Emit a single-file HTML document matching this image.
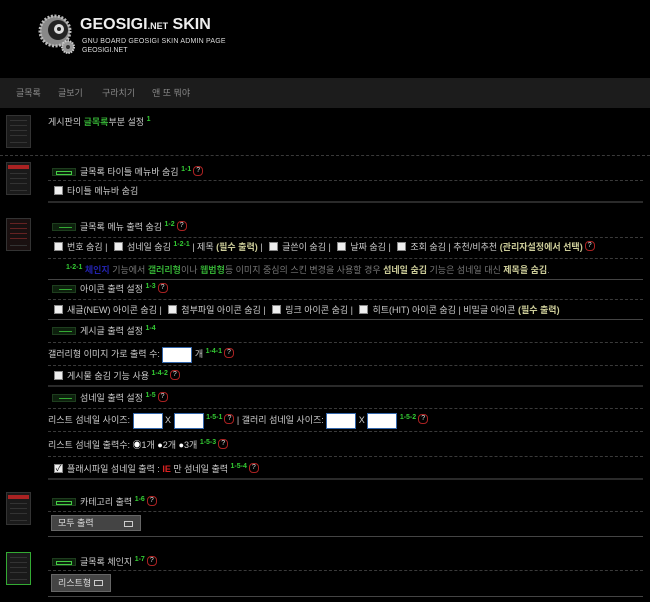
<!DOCTYPE html>
<html><head><meta charset="utf-8"><style>
*{margin:0;padding:0;box-sizing:border-box}
body{width:650px;height:602px;background:#000;overflow:hidden;position:relative;font-family:"Liberation Sans","Noto Sans CJK KR",sans-serif;font-size:9px;color:#ccc}
.a{position:absolute;white-space:nowrap;line-height:12px}
.dl{position:absolute;left:48px;right:7px;border-top:1px dashed #3a3a3a;height:0}
.sl{position:absolute;left:48px;right:7px;border-top:2px solid #2a2a2a;height:0}
.g{color:#3c3;font-weight:bold;font-size:7px;position:relative;top:-4px;line-height:0}
.y{color:#cc9;font-weight:bold}
.gr{color:#3a3;font-weight:bold}
.q{display:inline-block;width:10px;height:10px;border:1px solid #a22;border-radius:4px;color:#ddd;font-size:7px;line-height:8px;text-align:center;vertical-align:middle;margin-left:2px;position:relative;top:-2px}
.cb{display:inline-block;width:9px;height:9px;background:#eee;border:1px solid #888;vertical-align:middle;margin:0 4px 0 4px;position:relative;top:-1px}
.bar{display:inline-block;width:24px;height:8px;background:#0d200d;border:1px solid #1e3e1e;vertical-align:middle;margin-right:4px;position:relative;top:-1px}
.bar.on:after{content:"";position:absolute;left:3px;right:3px;top:2px;height:2px;border:1px solid #4c4}
.bar.off:after{content:"";position:absolute;left:6px;right:3px;top:3px;height:1px;background:#3a3}
.in{display:inline-block;width:30px;height:16px;background:#fff;border:1px solid #36a;vertical-align:middle}
.ic{position:absolute;left:6px;width:25px;height:33px;background:#1a1a1a;border:1px solid #333}
.ic i{position:absolute;left:3px;right:3px;height:1px;background:#333}
.sel{position:absolute;height:16px;background:#444;border:1px solid #666;color:#ddd;padding-left:6px;line-height:14px}
.sel:after{content:"";position:absolute;right:7px;top:5px;width:7px;height:4px;border:1px solid #ccc}
</style></head><body>
<div class="a" style="left:38px;top:14px;width:38px;height:40px">
<svg width="38" height="40" viewBox="0 0 38 40"><circle cx="17" cy="17" r="15" fill="#888" stroke="#bbb" stroke-width="3" stroke-dasharray="2 1.5"/><circle cx="20" cy="16" r="10" fill="#222"/><circle cx="21" cy="15" r="5" fill="#ddd"/><circle cx="21" cy="15" r="2" fill="#222"/><circle cx="30" cy="33" r="6" fill="#999" stroke="#ccc" stroke-width="2" stroke-dasharray="1.5 1"/><circle cx="30" cy="33" r="2" fill="#333"/></svg></div>
<div class="a" style="left:80px;top:16px;font-size:16px;line-height:18px;font-weight:bold;color:#eee">GEOSIGI<span style="font-size:9px">.NET</span> SKIN</div>
<div class="a" style="left:82px;top:36px;font-size:7px;color:#ddd;letter-spacing:0.2px">GNU BOARD GEOSIGI SKIN ADMIN PAGE</div>
<div class="a" style="left:82px;top:45px;font-size:7px;color:#ddd">GEOSIGI.NET</div>
<div class="a" style="left:0;top:78px;width:650px;height:30px;background:#1c1c1c"></div>
<div class="a" style="left:16px;top:87px;color:#888">글목록</div>
<div class="a" style="left:58px;top:87px;color:#888">글보기</div>
<div class="a" style="left:102px;top:87px;color:#888">구라치기</div>
<div class="a" style="left:152px;top:87px;color:#888">앤 또 뭐야</div>
<div class="ic" style="top:115px"><i style="top:4px"></i><i style="top:9px"></i><i style="top:14px"></i><i style="top:19px"></i><i style="top:26px"></i></div>
<div class="a" style="left:48px;top:116px">게시판의 <span class="gr">글목록</span>부분 설정 <span class="g">1</span></div>
<div class="a" style="left:0;right:0;top:155px;border-top:1px dashed #3a3a3a"></div>
<div class="ic" style="top:162px"><i style="top:2px;height:4px;background:#a22;left:1px;right:1px"></i><i style="top:10px"></i><i style="top:15px"></i><i style="top:20px"></i><i style="top:27px"></i></div>
<div class="a" style="left:52px;top:166px"><span class="bar on"></span>글목록 타이틀 메뉴바 숨김 <span class="g">1-1</span><span class="q">?</span></div>
<div class="dl" style="top:180px"></div>
<div class="a" style="left:50px;top:185px"><span class="cb"></span>타이틀 메뉴바 숨김</div>
<div class="sl" style="top:201px"></div>
<div class="ic" style="top:218px;background:#1a1010"><i style="top:4px;background:#622"></i><i style="top:9px;background:#622"></i><i style="top:14px;background:#622"></i><i style="top:19px;background:#622"></i><i style="top:26px"></i></div>
<div class="a" style="left:52px;top:221px"><span class="bar off"></span>글목록 메뉴 출력 숨김 <span class="g">1-2</span><span class="q">?</span></div>
<div class="dl" style="top:237px"></div>
<div class="a" style="left:50px;top:241px"><span class="cb"></span>번호 숨김 | <span class="cb"></span>섬네일 숨김 <span class="g">1-2-1</span> | 제목 <span class="y">(필수 출력)</span> | <span class="cb"></span>글쓴이 숨김 | <span class="cb"></span>날짜 숨김 | <span class="cb"></span>조회 숨김 | 추천/비추천 <span class="y">(관리자설정에서 선택)</span><span class="q">?</span></div>
<div class="dl" style="top:258px"></div>
<div class="a" style="left:66px;top:264px;color:#777"><span class="g">1-2-1</span> <span style="color:#22a;font-weight:bold">체인지</span> 기능에서 <span class="gr">갤러리형</span>이나 <span class="gr">웹범형</span>등 이미지 중심의 스킨 변경을 사용할 경우 <span class="y">섬네일 숨김</span> 기능은 섬네일 대신 <span class="y">제목을 숨김</span>.</div>
<div class="sl" style="top:279px;border-top-width:1px;border-color:#444"></div>
<div class="a" style="left:52px;top:283px"><span class="bar off"></span>아이콘 출력 설정 <span class="g">1-3</span><span class="q">?</span></div>
<div class="dl" style="top:299px"></div>
<div class="a" style="left:50px;top:304px"><span class="cb"></span>새글(NEW) 아이콘 숨김 | <span class="cb"></span>첨부파일 아이콘 숨김 | <span class="cb"></span>링크 아이콘 숨김 | <span class="cb"></span>히트(HIT) 아이콘 숨김 | 비밀글 아이콘 <span class="y">(필수 출력)</span></div>
<div class="sl" style="top:319px;border-top-width:1px;border-color:#444"></div>
<div class="a" style="left:52px;top:325px"><span class="bar off"></span>게시글 출력 설정 <span class="g">1-4</span></div>
<div class="dl" style="top:342px"></div>
<div class="a" style="left:48px;top:346px;line-height:16px">갤러리형 이미지 가로 출력 수: <span class="in"></span> 개 <span class="g">1-4-1</span><span class="q">?</span></div>
<div class="dl" style="top:365px"></div>
<div class="a" style="left:50px;top:370px"><span class="cb"></span>게시물 숨김 기능 사용 <span class="g">1-4-2</span><span class="q">?</span></div>
<div class="sl" style="top:385px"></div>
<div class="a" style="left:52px;top:392px"><span class="bar off"></span>섬네일 출력 설정 <span class="g">1-5</span><span class="q">?</span></div>
<div class="dl" style="top:408px"></div>
<div class="a" style="left:48px;top:412px;line-height:16px">리스트 섬네일 사이즈: <span class="in"></span> X <span class="in"></span> <span class="g">1-5-1</span><span class="q">?</span> | 갤러리 섬네일 사이즈: <span class="in"></span> X <span class="in"></span> <span class="g">1-5-2</span><span class="q">?</span></div>
<div class="dl" style="top:431px"></div>
<div class="a" style="left:48px;top:439px">리스트 섬네일 출력수: <span style="color:#fff">◉</span>1개 <span style="color:#fff">●</span>2개 <span style="color:#fff">●</span>3개 <span class="g">1-5-3</span><span class="q">?</span></div>
<div class="dl" style="top:456px"></div>
<div class="a" style="left:50px;top:463px"><span class="cb" style="font-size:8px;line-height:7px;color:#000;text-align:center">✓</span>플래시파일 섬네일 출력 : <span style="color:#d22;font-weight:bold">IE</span> 만 섬네일 출력 <span class="g">1-5-4</span><span class="q">?</span></div>
<div class="sl" style="top:478px"></div>
<div class="ic" style="top:492px"><i style="top:2px;height:4px;background:#a22;left:1px;right:1px"></i><i style="top:10px"></i><i style="top:15px"></i><i style="top:20px"></i><i style="top:27px"></i></div>
<div class="a" style="left:52px;top:496px"><span class="bar on"></span>카테고리 출력 <span class="g">1-6</span><span class="q">?</span></div>
<div class="dl" style="top:511px"></div>
<div class="sel" style="left:51px;top:515px;width:90px">모두 출력</div>
<div class="sl" style="top:536px;border-top-width:1px;border-color:#444"></div>
<div class="ic" style="top:552px;border-color:#3a3"><i style="top:4px"></i><i style="top:9px"></i><i style="top:14px"></i><i style="top:19px"></i><i style="top:26px"></i></div>
<div class="a" style="left:52px;top:556px"><span class="bar on"></span>글목록 체인지 <span class="g">1-7</span><span class="q">?</span></div>
<div class="dl" style="top:570px"></div>
<div class="sel" style="left:51px;top:574px;width:60px;height:18px;line-height:16px">리스트형</div>
<div class="sl" style="top:596px;border-top-width:1px;border-color:#444"></div>
</body></html>
